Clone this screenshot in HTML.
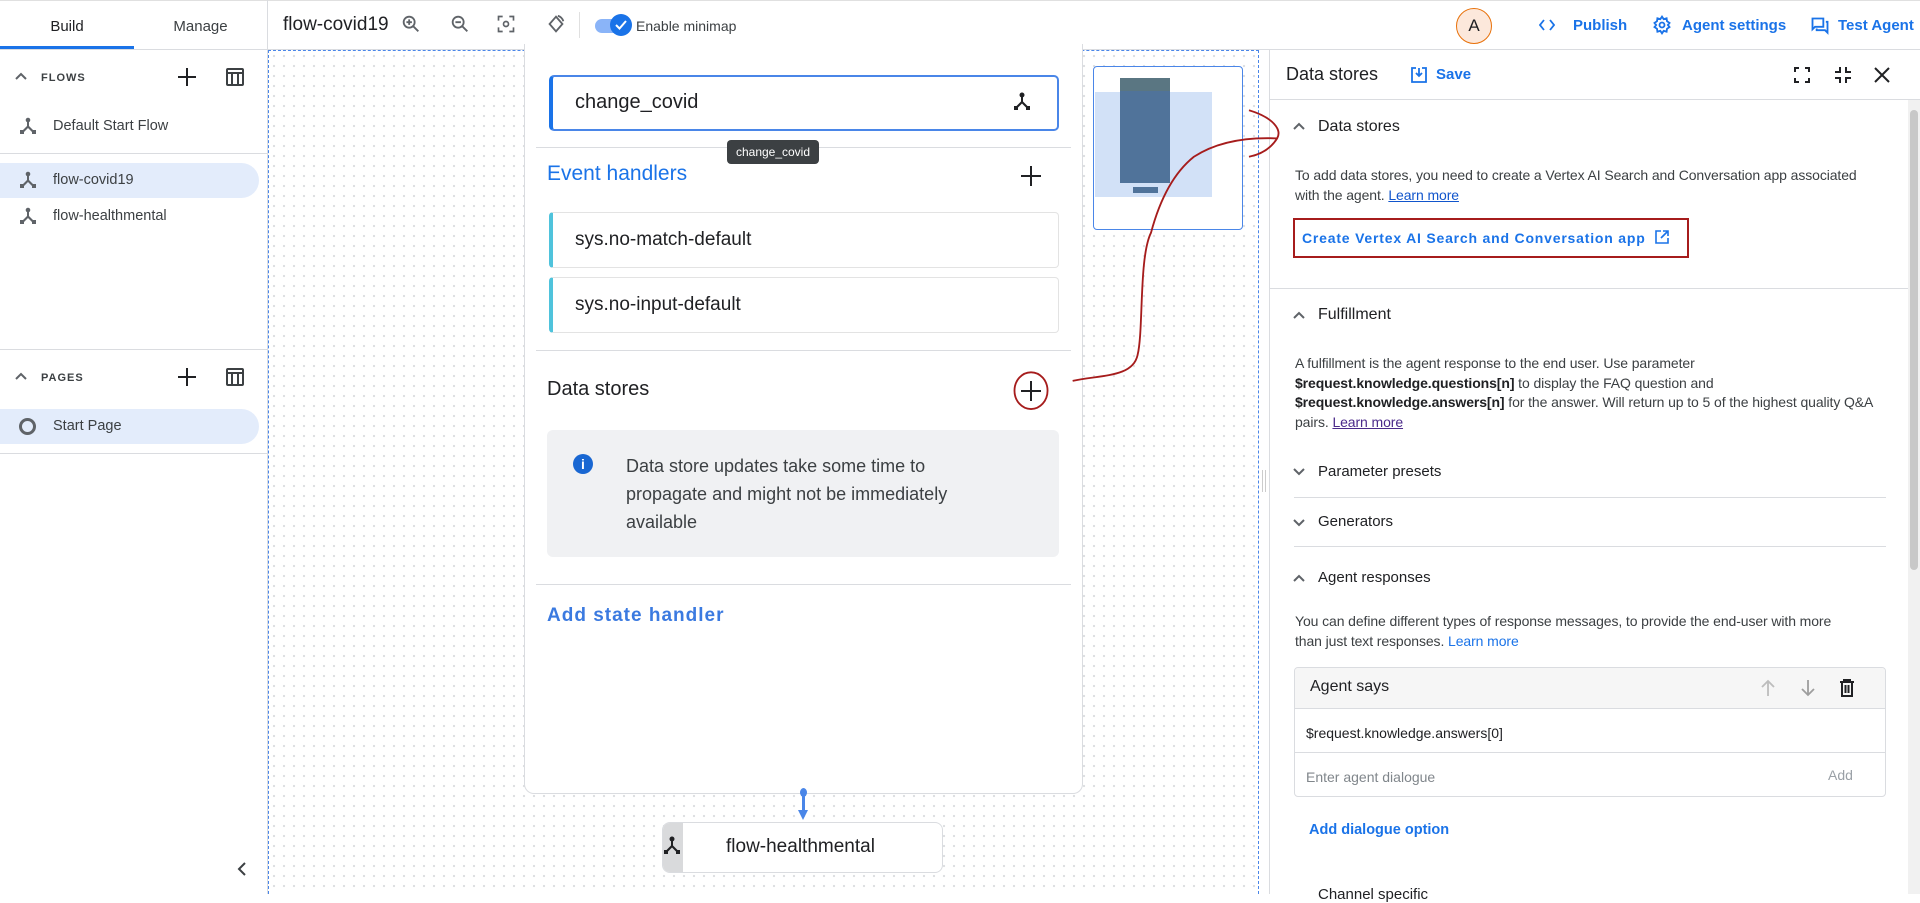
<!DOCTYPE html>
<html><head><meta charset="utf-8">
<style>
*{box-sizing:border-box;margin:0;padding:0}
body{width:1920px;height:894px;overflow:hidden;background:#fff;font-family:"Liberation Sans",sans-serif;color:#202124;position:relative}
.a{position:absolute}
.blue{color:#1a73e8}
.hr{position:absolute;height:1px;background:#dadce0}
svg{display:block}
</style></head><body>
<!-- top bar -->
<div class="hr" style="left:0;top:0;width:1920px;background:#e0e0e0"></div>
<div class="hr" style="left:0;top:49px;width:1920px"></div>
<div class="a" style="left:267px;top:0;width:1px;height:50px;background:#dadce0"></div>
<div class="a" style="left:0;top:2px;width:267px;height:50px;display:flex;font-size:15px">
 <div style="width:134px;text-align:center;line-height:50px;color:#202124">Build</div>
 <div style="width:133px;text-align:center;line-height:50px;color:#3c4043">Manage</div>
</div>
<div class="a" style="left:0;top:46px;width:134px;height:3px;background:#1a73e8"></div>
<div class="a" style="left:283px;top:14px;font-size:19px">flow-covid19</div>
<svg class="a" style="left:400px;top:13px" width="22" height="22" viewBox="0 0 24 24" fill="none" stroke="#5f6368" stroke-width="2"><circle cx="10" cy="10" r="6"/><path d="M14.5 14.5L20 20M10 7v6M7 10h6"/></svg>
<svg class="a" style="left:449px;top:13px" width="22" height="22" viewBox="0 0 24 24" fill="none" stroke="#5f6368" stroke-width="2"><circle cx="10" cy="10" r="6"/><path d="M14.5 14.5L20 20M7 10h6"/></svg>
<svg class="a" style="left:496px;top:14px" width="20" height="20" viewBox="0 0 24 24" fill="none" stroke="#5f6368" stroke-width="2"><path d="M3 8V3h5M16 3h5v5M21 16v5h-5M8 21H3v-5"/><circle cx="12" cy="12" r="3"/></svg>
<svg class="a" style="left:545px;top:13px" width="22" height="22" viewBox="0 0 24 24" fill="none" stroke="#5f6368" stroke-width="2"><path d="M12 4l-7 8 7 8 7-8z"/><path d="M14 3a9 9 0 0 1 6 6"/></svg>
<div class="a" style="left:579px;top:12px;width:1px;height:26px;background:#e0e0e0"></div>
<div class="a" style="left:595px;top:19px;width:34px;height:14px;border-radius:7px;background:#8ab4f8"></div>
<div class="a" style="left:610px;top:14px;width:22px;height:22px;border-radius:50%;background:#1a73e8"></div>
<svg class="a" style="left:613px;top:17px" width="16" height="16" viewBox="0 0 16 16" fill="none" stroke="#fff" stroke-width="2"><path d="M3 8l3.5 3.5L13 4"/></svg>
<div class="a" style="left:636px;top:18px;font-size:14px;color:#3c4043">Enable minimap</div>
<div class="a" style="left:1456px;top:8px;width:36px;height:36px;border-radius:50%;background:#fce8db;border:1px solid #e8710a;text-align:center;line-height:34px;font-size:17px">A</div>
<svg class="a" style="left:1539px;top:18px" width="16" height="14" viewBox="0 0 16 14" fill="none" stroke="#1a73e8" stroke-width="1.8"><path d="M5 2L1 7l4 5M11 2l4 5-4 5"/></svg>
<div class="a blue" style="left:1573px;top:17px;font-size:15px;font-weight:bold">Publish</div>
<svg class="a" style="left:1652px;top:15px" width="20" height="20" viewBox="0 0 24 24" fill="none" stroke="#1a73e8" stroke-width="2.2"><circle cx="12" cy="12" r="3"/><path d="M12 2l2 3 3.5-1 .5 3.5 3 2-2 2.5 2 2.5-3 2-.5 3.5-3.5-1-2 3-2-3-3.5 1-.5-3.5-3-2 2-2.5-2-2.5 3-2 .5-3.5 3.5 1z"/></svg>
<div class="a blue" style="left:1682px;top:17px;font-size:15px;font-weight:bold">Agent settings</div>
<svg class="a" style="left:1810px;top:16px" width="20" height="20" viewBox="0 0 24 24" fill="none" stroke="#1a73e8" stroke-width="2.2"><path d="M3 3h13v10H6l-3 3z"/><path d="M19 7h2v13l-3-3H8v-2"/></svg>
<div class="a blue" style="left:1838px;top:17px;font-size:15px;font-weight:bold">Test Agent</div>

<!-- left sidebar -->
<div class="a" style="left:267px;top:50px;width:1px;height:844px;background:#dadce0"></div>
<svg class="a" style="left:14px;top:71px" width="14" height="10" viewBox="0 0 14 10" fill="none" stroke="#5f6368" stroke-width="2"><path d="M2 8l5-5 5 5"/></svg>
<div class="a" style="left:41px;top:72px;font-size:11px;letter-spacing:1px;font-weight:bold;color:#3c4043">FLOWS</div>
<svg class="a" style="left:176px;top:66px" width="22" height="22" viewBox="0 0 22 22" stroke="#202124" stroke-width="2"><path d="M11 2v18M2 11h18"/></svg>
<svg class="a" style="left:225px;top:67px" width="20" height="20" viewBox="0 0 20 20" fill="none" stroke="#3c4043" stroke-width="2"><rect x="2" y="2" width="16" height="16" rx="1"/><path d="M2 6h16M7 6v12M13 6v12"/></svg>
<svg class="a" style="left:18px;top:116px" width="20" height="20" viewBox="0 0 20 20" fill="#5f6368"><circle cx="10" cy="4" r="2.3"/><rect x="2" y="14" width="4" height="4"/><rect x="14" y="14" width="4" height="4"/><path d="M9 5h2v5l5 5-1.5 1.5L10 12l-4.5 4.5L4 15l5-5z"/></svg>
<div class="a" style="left:53px;top:118px;font-size:14.5px;color:#3c4043">Default Start Flow</div>
<div class="hr" style="left:0;top:153px;width:267px"></div>
<div class="a" style="left:0;top:163px;width:259px;height:35px;border-radius:0 18px 18px 0;background:#e3ecfb"></div>
<svg class="a" style="left:18px;top:170px" width="20" height="20" viewBox="0 0 20 20" fill="#5f6368"><circle cx="10" cy="4" r="2.3"/><rect x="2" y="14" width="4" height="4"/><rect x="14" y="14" width="4" height="4"/><path d="M9 5h2v5l5 5-1.5 1.5L10 12l-4.5 4.5L4 15l5-5z"/></svg>
<div class="a" style="left:53px;top:172px;font-size:14.5px;color:#3c4043">flow-covid19</div>
<svg class="a" style="left:18px;top:206px" width="20" height="20" viewBox="0 0 20 20" fill="#5f6368"><circle cx="10" cy="4" r="2.3"/><rect x="2" y="14" width="4" height="4"/><rect x="14" y="14" width="4" height="4"/><path d="M9 5h2v5l5 5-1.5 1.5L10 12l-4.5 4.5L4 15l5-5z"/></svg>
<div class="a" style="left:53px;top:208px;font-size:14.5px;color:#3c4043">flow-healthmental</div>
<div class="hr" style="left:0;top:349px;width:267px"></div>
<svg class="a" style="left:14px;top:371px" width="14" height="10" viewBox="0 0 14 10" fill="none" stroke="#5f6368" stroke-width="2"><path d="M2 8l5-5 5 5"/></svg>
<div class="a" style="left:41px;top:372px;font-size:11px;letter-spacing:1px;font-weight:bold;color:#3c4043">PAGES</div>
<svg class="a" style="left:176px;top:366px" width="22" height="22" viewBox="0 0 22 22" stroke="#202124" stroke-width="2"><path d="M11 2v18M2 11h18"/></svg>
<svg class="a" style="left:225px;top:367px" width="20" height="20" viewBox="0 0 20 20" fill="none" stroke="#3c4043" stroke-width="2"><rect x="2" y="2" width="16" height="16" rx="1"/><path d="M2 6h16M7 6v12M13 6v12"/></svg>
<div class="a" style="left:0;top:409px;width:259px;height:35px;border-radius:0 18px 18px 0;background:#e3ecfb"></div>
<div class="a" style="left:19px;top:418px;width:17px;height:17px;border-radius:50%;border:3.5px solid #5f6368"></div>
<div class="a" style="left:53px;top:418px;font-size:14.5px;color:#3c4043">Start Page</div>
<div class="hr" style="left:0;top:453px;width:267px"></div>
<svg class="a" style="left:235px;top:861px" width="14" height="16" viewBox="0 0 14 16" fill="none" stroke="#3c4043" stroke-width="2"><path d="M10 2L4 8l6 6"/></svg>

<!-- canvas -->
<div class="a" style="left:268px;top:50px;width:991px;height:844px;background-color:#fff;background-image:radial-gradient(#dcdee1 1px,transparent 1.3px);background-size:10px 10px;border:1px dashed #4a86e8;border-bottom:none"></div>
<div class="a" style="left:524px;top:44px;width:559px;height:750px;background:#fff;border:1px solid #dadce0;border-top:none;border-radius:0 0 10px 10px"></div>
<div class="a" style="left:549px;top:75px;width:510px;height:56px;border:2px solid #4a86e8;border-left:4px solid #1a73e8;border-radius:5px"></div>
<div class="a" style="left:575px;top:91px;font-size:20px">change_covid</div>
<svg class="a" style="left:1012px;top:91px" width="20" height="22" viewBox="0 0 20 22" fill="#202124"><circle cx="10" cy="4" r="2.5"/><rect x="2" y="15" width="4" height="4"/><rect x="14" y="15" width="4" height="4"/><path d="M9 5h2v5.5l5 5-1.5 1.5L10 12.5 5.5 17 4 15.5l5-5z"/></svg>
<div class="hr" style="left:536px;top:147px;width:535px"></div>
<div class="a" style="left:727px;top:140px;width:92px;height:24px;border-radius:4px;background:#3c4043;color:#fff;font-size:12px;text-align:center;line-height:24px">change_covid</div>
<div class="a" style="left:547px;top:162px;font-size:21px;color:#1a73e8">Event handlers</div>
<svg class="a" style="left:1020px;top:165px" width="22" height="22" viewBox="0 0 22 22" stroke="#202124" stroke-width="2"><path d="M11 1v20M1 11h20"/></svg>
<div class="a" style="left:549px;top:212px;width:510px;height:56px;border:1px solid #e3e3e3;border-left:4px solid #4fc3dc;border-radius:4px"></div>
<div class="a" style="left:575px;top:229px;font-size:19px">sys.no-match-default</div>
<div class="a" style="left:549px;top:277px;width:510px;height:56px;border:1px solid #e3e3e3;border-left:4px solid #4fc3dc;border-radius:4px"></div>
<div class="a" style="left:575px;top:294px;font-size:19px">sys.no-input-default</div>
<div class="hr" style="left:536px;top:350px;width:535px"></div>
<div class="a" style="left:547px;top:378px;font-size:20px">Data stores</div>
<svg class="a" style="left:1020px;top:380px" width="22" height="22" viewBox="0 0 22 22" stroke="#202124" stroke-width="2"><path d="M11 1v20M1 11h20"/></svg>
<div class="a" style="left:547px;top:430px;width:512px;height:127px;border-radius:6px;background:#f0f1f3"></div>
<div class="a" style="left:573px;top:454px;width:20px;height:20px;border-radius:50%;background:#1967d2;color:#fff;font-weight:bold;font-size:14px;text-align:center;line-height:20px">i</div>
<div class="a" style="left:626px;top:452px;font-size:18px;line-height:28px;color:#3c4043;width:370px">Data store updates take some time to propagate and might not be immediately available</div>
<div class="hr" style="left:536px;top:584px;width:535px"></div>
<div class="a" style="left:547px;top:605px;font-size:19px;font-weight:bold;letter-spacing:1px;color:#3b7ae0">Add state handler</div>
<div class="a" style="left:800px;top:788px;width:7px;height:9px;border-radius:50%;background:#4a86e8"></div>
<div class="a" style="left:802px;top:794px;width:3px;height:18px;background:#4a86e8"></div>
<div class="a" style="left:798px;top:810px;width:0;height:0;border-left:5.5px solid transparent;border-right:5.5px solid transparent;border-top:10px solid #4a86e8"></div>
<div class="a" style="left:662px;top:822px;width:281px;height:51px;border:1px solid #dadce0;border-radius:8px;background:#fff;overflow:hidden"><div style="width:20px;height:51px;background:#d9dadc;float:left"></div></div>
<svg class="a" style="left:664px;top:835px" width="16" height="22" viewBox="0 0 16 22" fill="#202124"><circle cx="8" cy="4" r="2.5"/><rect x="0" y="15" width="4" height="4"/><rect x="12" y="15" width="4" height="4"/><path d="M7 5h2v5.5l5 5-1.5 1.5L8 12.5 3.5 17 2 15.5l5-5z"/></svg>
<div class="a" style="left:726px;top:836px;font-size:19px">flow-healthmental</div>
<!-- minimap -->
<div class="a" style="left:1093px;top:66px;width:150px;height:164px;border:1px solid #4a86e8;border-radius:4px;background:#fff"></div>
<div class="a" style="left:1095px;top:92px;width:117px;height:105px;background:#d2e1f7"></div>
<div class="a" style="left:1120px;top:78px;width:50px;height:105px;background:#50739a"></div>
<div class="a" style="left:1120px;top:78px;width:50px;height:13px;background:#5a7682"></div>
<div class="a" style="left:1133px;top:187px;width:25px;height:6px;background:#50739a"></div>

<!-- right panel -->
<div class="a" style="left:1269px;top:50px;width:1px;height:844px;background:#dadce0"></div>
<div class="a" style="left:1262px;top:470px;width:4px;height:22px;border-left:1px solid #ccc;border-right:1px solid #ccc"></div>
<div class="a" style="left:1286px;top:64px;font-size:18px">Data stores</div>
<svg class="a" style="left:1410px;top:66px" width="18" height="18" viewBox="0 0 18 18" fill="none" stroke="#1a73e8" stroke-width="1.8"><path d="M6 2H2v14h14V2h-4M9 2v8M6 7l3 3 3-3"/></svg>
<div class="a blue" style="left:1436px;top:66px;font-size:15px;font-weight:bold">Save</div>
<svg class="a" style="left:1793px;top:66px" width="18" height="18" viewBox="0 0 18 18" fill="none" stroke="#202124" stroke-width="2"><path d="M2 6V2h4M12 2h4v4M16 12v4h-4M6 16H2v-4"/></svg>
<svg class="a" style="left:1834px;top:66px" width="18" height="18" viewBox="0 0 18 18" fill="none" stroke="#202124" stroke-width="2"><path d="M6 1v5H1M12 1v5h5M17 12h-5v5M1 12h5v5"/></svg>
<svg class="a" style="left:1873px;top:66px" width="18" height="18" viewBox="0 0 18 18" stroke="#202124" stroke-width="2"><path d="M2 2l14 14M16 2L2 16"/></svg>
<div class="hr" style="left:1270px;top:99px;width:650px"></div>
<div class="a" style="left:1908px;top:100px;width:12px;height:794px;background:#f1f1f1"></div>
<div class="a" style="left:1910px;top:110px;width:8px;height:460px;border-radius:4px;background:#c8c8c8"></div>

<svg class="a" style="left:1292px;top:121px" width="14" height="10" viewBox="0 0 14 10" fill="none" stroke="#5f6368" stroke-width="2"><path d="M2 8l5-5 5 5"/></svg>
<div class="a" style="left:1318px;top:118px;font-size:16px">Data stores</div>
<div class="a" style="left:1295px;top:165px;font-size:14px;letter-spacing:-0.1px;line-height:20px;color:#3c4043;width:570px">To add data stores, you need to create a Vertex AI Search and Conversation app associated with the agent. <span style="text-decoration:underline;color:#1155cc">Learn more</span></div>
<div class="a" style="left:1293px;top:218px;width:396px;height:40px;border:2px solid #a61c1c"></div>
<div class="a blue" style="left:1302px;top:230px;font-size:14px;font-weight:bold;letter-spacing:.8px">Create Vertex AI Search and Conversation app</div>
<svg class="a" style="left:1654px;top:229px" width="16" height="16" viewBox="0 0 16 16" fill="none" stroke="#1a73e8" stroke-width="1.6"><path d="M7 2H2v12h12V9M9 2h5v5M14 2L7 9"/></svg>
<div class="hr" style="left:1270px;top:288px;width:638px"></div>
<svg class="a" style="left:1292px;top:310px" width="14" height="10" viewBox="0 0 14 10" fill="none" stroke="#5f6368" stroke-width="2"><path d="M2 8l5-5 5 5"/></svg>
<div class="a" style="left:1318px;top:306px;font-size:16px">Fulfillment</div>
<div class="a" style="left:1295px;top:354px;font-size:14px;letter-spacing:-0.1px;line-height:19.5px;color:#3c4043;width:610px">A fulfillment is the agent response to the end user. Use parameter <b style="color:#202124">$request.knowledge.questions[n]</b> to display the FAQ question and <b style="color:#202124">$request.knowledge.answers[n]</b> for the answer. Will return up to 5 of the highest quality Q&amp;A pairs. <span style="color:#4b2a8a;text-decoration:underline">Learn more</span></div>
<svg class="a" style="left:1292px;top:467px" width="14" height="10" viewBox="0 0 14 10" fill="none" stroke="#5f6368" stroke-width="2"><path d="M2 2l5 5 5-5"/></svg>
<div class="a" style="left:1318px;top:463px;font-size:15px">Parameter presets</div>
<div class="hr" style="left:1294px;top:497px;width:592px"></div>
<svg class="a" style="left:1292px;top:518px" width="14" height="10" viewBox="0 0 14 10" fill="none" stroke="#5f6368" stroke-width="2"><path d="M2 2l5 5 5-5"/></svg>
<div class="a" style="left:1318px;top:513px;font-size:15px">Generators</div>
<div class="hr" style="left:1294px;top:546px;width:592px"></div>
<svg class="a" style="left:1292px;top:573px" width="14" height="10" viewBox="0 0 14 10" fill="none" stroke="#5f6368" stroke-width="2"><path d="M2 8l5-5 5 5"/></svg>
<div class="a" style="left:1318px;top:569px;font-size:15px">Agent responses</div>
<div class="a" style="left:1295px;top:611px;font-size:14px;letter-spacing:-0.1px;line-height:20px;color:#3c4043;width:550px">You can define different types of response messages, to provide the end-user with more than just text responses. <span style="color:#1a73e8">Learn more</span></div>
<div class="a" style="left:1294px;top:667px;width:592px;height:130px;border:1px solid #dadce0;border-radius:4px;overflow:hidden">
 <div style="height:41px;background:#f6f6f6;border-bottom:1px solid #dadce0"></div>
 <div style="height:44px;border-bottom:1px solid #dadce0"></div>
</div>
<div class="a" style="left:1310px;top:678px;font-size:16px">Agent says</div>
<svg class="a" style="left:1759px;top:678px" width="18" height="20" viewBox="0 0 18 20" fill="none" stroke="#bdbdbd" stroke-width="1.8"><path d="M9 18V3M3 9l6-6 6 6"/></svg>
<svg class="a" style="left:1799px;top:678px" width="18" height="20" viewBox="0 0 18 20" fill="none" stroke="#9e9e9e" stroke-width="1.8"><path d="M9 2v15M3 11l6 6 6-6"/></svg>
<svg class="a" style="left:1839px;top:678px" width="16" height="20" viewBox="0 0 16 20" fill="none" stroke="#202124" stroke-width="2"><path d="M1 4h14M5 4V2h6v2M3 4v14h10V4M6.5 7v8M9.5 7v8"/></svg>
<div class="a" style="left:1306px;top:725px;font-size:14px">$request.knowledge.answers[0]</div>
<div class="a" style="left:1306px;top:769px;font-size:14px;color:#80868b">Enter agent dialogue</div>
<div class="a" style="left:1828px;top:767px;font-size:14px;color:#9aa0a6">Add</div>
<div class="a blue" style="left:1309px;top:822px;font-size:14.5px;font-weight:bold">Add dialogue option</div>
<div class="a" style="left:1318px;top:886px;font-size:15px;color:#202124">Channel specific</div>

<!-- red annotations -->
<svg class="a" style="left:0;top:0" width="1920" height="894" viewBox="0 0 1568 730" preserveAspectRatio="none" fill="none" stroke="#a61c1c" stroke-width="1.5">
 <ellipse cx="842" cy="319" rx="13.5" ry="15"/>
 <path d="M876 311 C900 306 925 308 929 290 C934 270 930 210 940 190 C948 160 960 140 975 128 C995 115 1020 112 1043 113"/>
 <path d="M1020 90 C1040 96 1047 106 1043 113 C1038 121 1030 126 1020 128"/>
</svg>
</body></html>
